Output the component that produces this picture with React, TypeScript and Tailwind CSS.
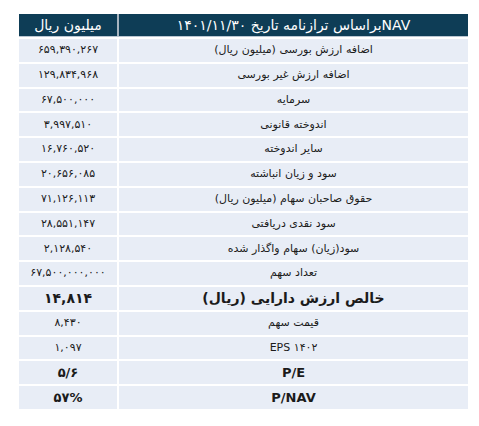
import React from 'react';

type Row = { label: React.ReactNode; value: React.ReactNode; bold?: boolean; big?: boolean };

const rows: Row[] = [
  { label: 'اضافه ارزش بورسی (میلیون ریال)', value: '۶۵۹,۳۹۰,۲۶۷' },
  { label: 'اضافه ارزش غیر بورسی', value: '۱۲۹,۸۳۴,۹۶۸' },
  { label: 'سرمایه', value: '۶۷,۵۰۰,۰۰۰' },
  { label: 'اندوخته قانونی', value: '۳,۹۹۷,۵۱۰' },
  { label: 'سایر اندوخته', value: '۱۶,۷۶۰,۵۲۰' },
  { label: 'سود و زیان انباشته', value: '۲۰,۶۵۶,۰۸۵' },
  { label: 'حقوق صاحبان سهام (میلیون ریال)', value: '۷۱,۱۲۶,۱۱۳' },
  { label: 'سود نقدی دریافتی', value: '۲۸,۵۵۱,۱۴۷' },
  { label: 'سود(زیان) سهام واگذار شده', value: '۲,۱۲۸,۵۴۰' },
  { label: 'تعداد سهم', value: '۶۷,۵۰۰,۰۰۰,۰۰۰' },
  { label: 'خالص ارزش دارایی (ریال)', value: '۱۴,۸۱۴', bold: true, big: true },
  { label: 'قیمت سهم', value: '۸,۴۳۰' },
  { label: <span dir="ltr">EPS ۱۴۰۲</span>, value: '۱,۰۹۷' },
  { label: 'P/E', value: '۵/۶', bold: true },
  { label: 'P/NAV', value: <span dir="ltr">۵۷%</span>, bold: true },
];

export default function App() {
  return (
    <div className="min-h-[426px] w-[479px] bg-white pl-[19px] pt-[14px] font-['DejaVu_Sans',sans-serif]">
      <div dir="rtl" className="flex w-[449px] flex-col gap-[2px] bg-white">
        {/* header */}
        <div className="flex h-[23px] border-b border-[#b9c6d2] bg-[#0e3d56] text-white">
          <div className="flex flex-1 items-center justify-center border-l-2 border-[#a7b4bf] text-[14px]">
            NAVبراساس ترازنامه تاریخ ۱۴۰۱/۱۱/۳۰
          </div>
          <div className="flex w-[98px] items-center justify-center text-[14px]">میلیون ریال</div>
        </div>

        {rows.map((r, i) => (
          <div key={i} className="flex h-[22.8px] gap-[2px] text-[#1b1b1b]">
            <div
              className={`flex flex-1 items-center justify-center bg-[#e8edf6] ${
                r.big ? 'text-[14px] font-bold' : r.bold ? 'text-[13px] font-bold' : 'text-[11px]'
              }`}
            >
              {r.label}
            </div>
            <div
              className={`flex w-[98px] items-center justify-center bg-[#e8edf6] ${
                r.big ? 'text-[14px] font-bold' : r.bold ? 'text-[13px] font-bold' : 'text-[11px]'
              }`}
            >
              {r.value}
            </div>
          </div>
        ))}
      </div>
    </div>
  );
}
